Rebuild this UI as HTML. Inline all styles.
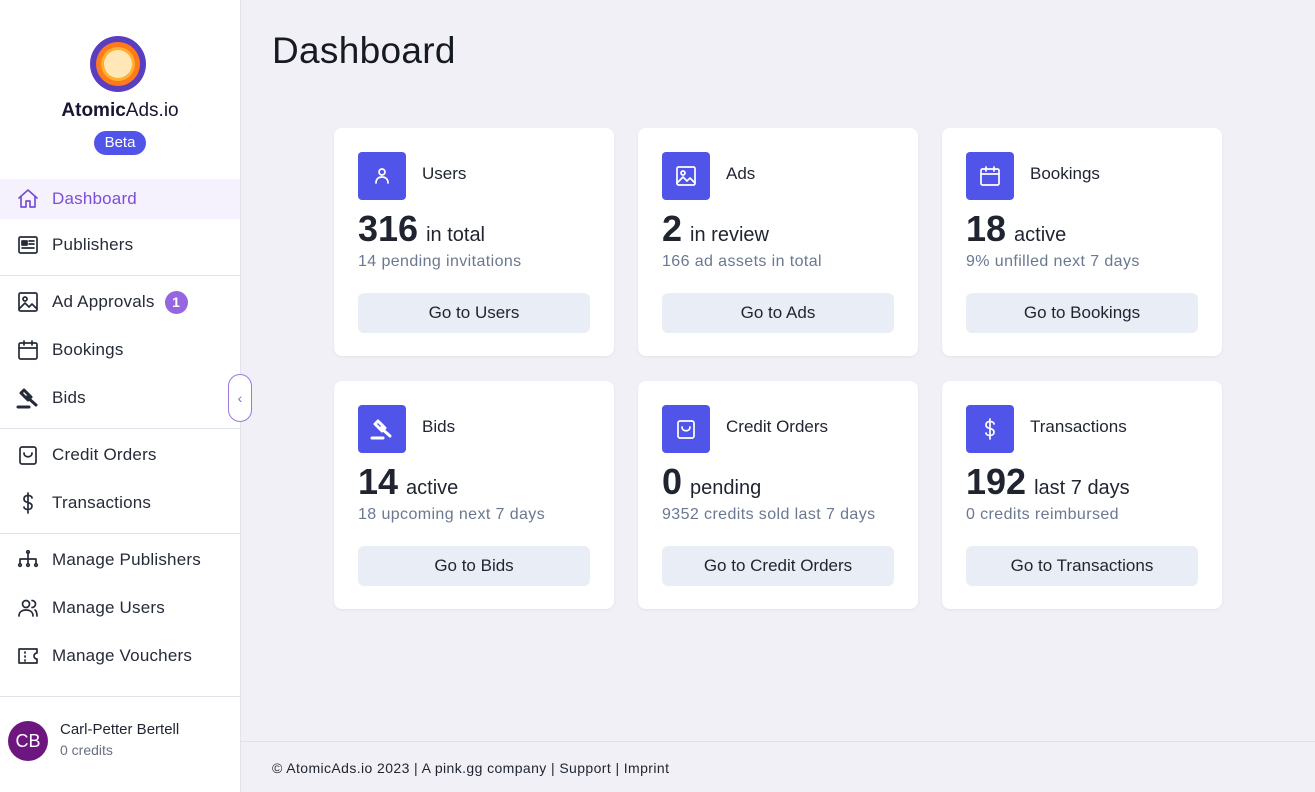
<!DOCTYPE html>
<html><head><meta charset="utf-8"><style>
*{box-sizing:border-box;margin:0;padding:0}
body{width:1315px;height:792px;overflow:hidden;font-family:"Liberation Sans",sans-serif;background:#f1f0f6;color:#1f2430;position:relative}
.sb{position:absolute;left:0;top:0;width:241px;height:792px;background:#fff;border-right:1px solid #e2e4ec}
.logo{position:absolute;left:90px;top:36px;width:56px;height:56px;border-radius:50%;background:#5a3ec0}
.logo:before{content:"";position:absolute;left:6px;top:6px;width:44px;height:44px;border-radius:50%;background:#ff7a1a}
.logo:after{content:"";position:absolute;left:14px;top:14px;width:28px;height:28px;border-radius:50%;background:#ffe7b8;box-shadow:0 0 0 3px #ffb030}
.brand{position:absolute;left:0;width:240px;top:100px;text-align:center;font-size:19px;color:#1a1530}
.beta{position:absolute;left:94px;top:131px;width:52px;height:24px;border-radius:12px;background:#5154e8;color:#fff;font-size:15px;text-align:center;line-height:24px}
.it{position:absolute;left:0;width:240px;height:40px;display:flex;align-items:center;padding-left:16px;font-size:17px;color:#252b38;letter-spacing:.2px}
.it svg{width:24px;height:24px;margin-right:12px;fill:none;stroke:#252b38;stroke-width:1.7;stroke-linecap:round;stroke-linejoin:round}
.it.act{background:#f6f2fd;color:#7a4fd6}
.it.act svg{stroke:#7a4fd6}
.hr{position:absolute;left:0;width:240px;height:1px;background:#e0e2ea}
.badge{margin-left:10px;width:23px;height:23px;border-radius:50%;background:#9566e0;color:#fff;font-size:14px;text-align:center;line-height:23px;font-weight:bold}
.col{position:absolute;left:228px;top:374px;width:24px;height:48px;border:1px solid #9a78e0;border-radius:12px;background:#fff;color:#8a60dc;font-size:14px;text-align:center;line-height:46px}
.av{position:absolute;left:8px;top:721px;width:40px;height:40px;border-radius:50%;background:#6e1680;color:#fff;font-size:18px;text-align:center;line-height:40px}
h1{position:absolute;left:272px;top:30px;font-size:37px;font-weight:normal;color:#161a22;letter-spacing:.3px}
.card{position:absolute;width:280px;height:228px;background:#fff;border-radius:8px;box-shadow:0 1px 3px rgba(0,0,0,.06)}
.ic{position:absolute;left:24px;top:24px;width:48px;height:48px;border-radius:4px;background:#5154e8}
.ic svg{position:absolute;left:12px;top:12px;width:24px;height:24px;fill:none;stroke:#fff;stroke-width:1.7;stroke-linecap:round;stroke-linejoin:round}
.ti{position:absolute;left:88px;top:36px;font-size:17px}
.num{position:absolute;left:24px;top:80px;font-size:20px;white-space:nowrap}
.num b{font-size:36px;margin-right:8px}
.sub{position:absolute;left:24px;top:125px;font-size:16px;color:#6a7890;letter-spacing:.4px}
.btn{position:absolute;left:24px;top:165px;width:232px;height:40px;border-radius:6px;background:#e9edf5;text-align:center;line-height:40px;font-size:17px}
.ft{position:absolute;left:241px;top:741px;width:1074px;border-top:1px solid #e0e2ea;height:51px}
.ft span{position:absolute;left:31px;top:18px;font-size:14px;color:#1f2430;letter-spacing:.4px}
</style></head><body>
<div class="sb">
<div class="logo"></div>
<div class="brand"><b>Atomic</b>Ads.io</div>
<div class="beta">Beta</div>
<div class="it act" style="top:179px"><svg viewBox="0 0 24 24"><path d="M3 11l9-8 9 8M5 9.5V20h5v-6h4v6h5V9.5"/></svg>Dashboard</div>
<div class="it" style="top:225px"><svg viewBox="0 0 24 24"><rect x="3" y="4" width="18" height="16" rx="1.5"/><rect x="6" y="8" width="5" height="4" fill="#252b38"/><path d="M13 8h5M13 11h5M6 15h12"/></svg>Publishers</div>
<div class="hr" style="top:275px"></div>
<div class="it" style="top:282px"><svg viewBox="0 0 24 24"><rect x="3" y="3" width="18" height="18" rx="1.5"/><circle cx="9" cy="9" r="2"/><path d="M3 19l6-6 4 4 3-3 5 5"/></svg>Ad Approvals<span class="badge">1</span></div>
<div class="it" style="top:330px"><svg viewBox="0 0 24 24"><rect x="3" y="5" width="18" height="16" rx="1.5"/><path d="M3 10h18M8 3v4M16 3v4"/></svg>Bookings</div>
<div class="it" style="top:378px"><svg viewBox="0 0 24 24"><path d="M5 7l3-3 7 7-3 3zM11 11l9 8" stroke-width="3"/><path d="M2 21h11" stroke-width="3"/></svg>Bids</div>
<div class="hr" style="top:428px"></div>
<div class="it" style="top:435px"><svg viewBox="0 0 24 24"><rect x="4" y="4" width="16" height="17" rx="2"/><path d="M8 10c0 5 8 5 8 0"/></svg>Credit Orders</div>
<div class="it" style="top:483px"><svg viewBox="0 0 24 24"><path d="M12 2v20M16 7c0-1.5-1.8-2.5-4-2.5S8 5.6 8 8s2 3 4 3.5 4 1.2 4 3.5-1.8 3.5-4 3.5-4-1-4-2.5"/></svg>Transactions</div>
<div class="hr" style="top:533px"></div>
<div class="it" style="top:540px"><svg viewBox="0 0 24 24"><path d="M12 5v6M4 11h16M4 11v4M12 11v4M20 11v4"/><circle cx="12" cy="4" r="1.3"/><circle cx="4" cy="17" r="1.3"/><circle cx="12" cy="17" r="1.3"/><circle cx="20" cy="17" r="1.3"/></svg>Manage Publishers</div>
<div class="it" style="top:588px"><svg viewBox="0 0 24 24"><circle cx="10" cy="8" r="3.5"/><path d="M3 20c0-4 3-6 7-6s7 2 7 6M16 4.5a3.5 3.5 0 010 7M19 14c1.5 1 2 3 2 6"/></svg>Manage Users</div>
<div class="it" style="top:636px"><svg viewBox="0 0 24 24"><path d="M3 5h18v4a3 3 0 000 6v4H3z"/><path d="M9 8v1M9 12v1M9 16v1"/></svg>Manage Vouchers</div>
<div class="hr" style="top:696px"></div>
<div class="av">CB</div>
<div style="position:absolute;left:60px;top:721px;font-size:15px">Carl-Petter Bertell</div>
<div style="position:absolute;left:60px;top:742px;font-size:14px;color:#6a7080">0 credits</div>
</div>
<div class="col">&#8249;</div>
<h1>Dashboard</h1>

<div class="card" style="left:334px;top:128px"><div class="ic"><svg viewBox="0 0 24 24"><circle cx="12" cy="8" r="3"/><path d="M6 19c0-4 2.5-6 6-6s6 2 6 6"/></svg></div><div class="ti">Users</div><div class="num"><b>316</b>in total</div><div class="sub">14 pending invitations</div><div class="btn">Go to Users</div></div>
<div class="card" style="left:638px;top:128px"><div class="ic"><svg viewBox="0 0 24 24"><rect x="3" y="3" width="18" height="18" rx="1.5"/><circle cx="9" cy="9" r="2"/><path d="M3 19l6-6 4 4 3-3 5 5"/></svg></div><div class="ti">Ads</div><div class="num"><b>2</b>in review</div><div class="sub">166 ad assets in total</div><div class="btn">Go to Ads</div></div>
<div class="card" style="left:942px;top:128px"><div class="ic"><svg viewBox="0 0 24 24"><rect x="3" y="5" width="18" height="16" rx="1.5"/><path d="M3 10h18M8 3v4M16 3v4"/></svg></div><div class="ti">Bookings</div><div class="num"><b>18</b>active</div><div class="sub">9% unfilled next 7 days</div><div class="btn">Go to Bookings</div></div>
<div class="card" style="left:334px;top:381px"><div class="ic"><svg viewBox="0 0 24 24"><path d="M5 7l3-3 7 7-3 3zM11 11l9 8M2 21h11" stroke-width="3"/></svg></div><div class="ti">Bids</div><div class="num"><b>14</b>active</div><div class="sub">18 upcoming next 7 days</div><div class="btn">Go to Bids</div></div>
<div class="card" style="left:638px;top:381px"><div class="ic"><svg viewBox="0 0 24 24"><rect x="4" y="4" width="16" height="17" rx="2"/><path d="M8 10c0 5 8 5 8 0"/></svg></div><div class="ti">Credit Orders</div><div class="num"><b>0</b>pending</div><div class="sub">9352 credits sold last 7 days</div><div class="btn">Go to Credit Orders</div></div>
<div class="card" style="left:942px;top:381px"><div class="ic"><svg viewBox="0 0 24 24"><path d="M12 2v20M16 7c0-1.5-1.8-2.5-4-2.5S8 5.6 8 8s2 3 4 3.5 4 1.2 4 3.5-1.8 3.5-4 3.5-4-1-4-2.5"/></svg></div><div class="ti">Transactions</div><div class="num"><b>192</b>last 7 days</div><div class="sub">0 credits reimbursed</div><div class="btn">Go to Transactions</div></div>

<div class="ft"><span>© AtomicAds.io 2023 | A pink.gg company | Support | Imprint</span></div>
</body></html>
